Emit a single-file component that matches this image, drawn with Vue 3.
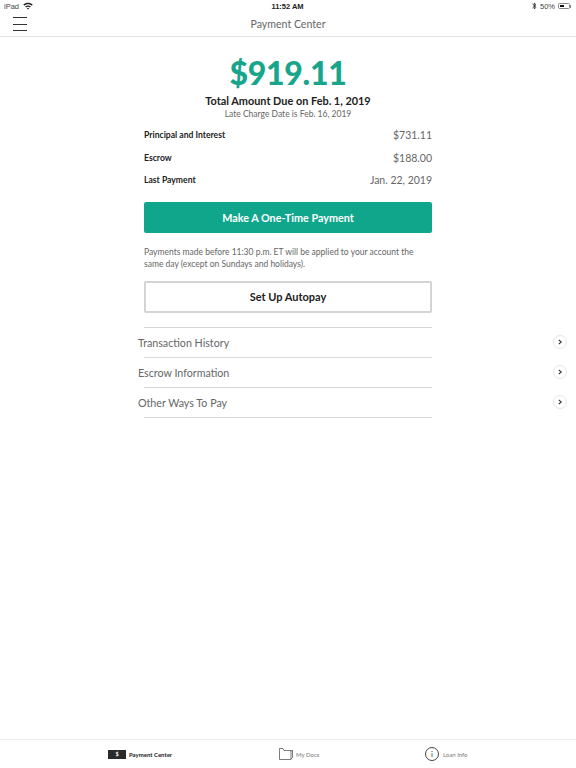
<template>
  <div class="page">
    <div class="status">
      <div class="status-left">
        <span>iPad</span>
        <svg class="wifi" width="10" height="8" viewBox="0 0 10 8"><path d="M0.3 2.6C3 0 7 0 9.7 2.6L8.7 3.7C6.5 1.7 3.5 1.7 1.3 3.7ZM2.1 4.5C3.8 3 6.2 3 7.9 4.5L6.9 5.5C5.8 4.6 4.2 4.6 3.1 5.5ZM3.9 6.4C4.5 5.9 5.5 5.9 6.1 6.4L5 7.6Z" fill="#222"/></svg>
      </div>
      <div class="status-time">11:52 AM</div>
      <div class="status-right">
        <svg width="5" height="8" viewBox="0 0 5 8"><path d="M0.5 2L4 5.3L2.3 7V1L4 2.7L0.5 6" fill="none" stroke="#222" stroke-width="0.8"/></svg>
        <span>50%</span>
        <span class="battery"><span class="battery-fill"></span></span>
        <span class="battery-tip"></span>
      </div>
    </div>
    <header class="topbar">
      <button class="menu" aria-label="Menu"><span></span><span></span><span></span></button>
      <div class="title">Payment Center</div>
    </header>

    <main class="content">
      <div class="amount">$919.11</div>
      <div class="due">Total Amount Due on Feb. 1, 2019</div>
      <div class="late">Late Charge Date is Feb. 16, 2019</div>

      <div class="details">
        <div v-for="row in details" :key="row.label" class="detail">
          <span class="detail-label">{{ row.label }}</span>
          <span class="detail-value">{{ row.value }}</span>
        </div>
      </div>

      <button class="btn-pay">Make A One-Time Payment</button>
      <p class="note">Payments made before 11:30 p.m. ET will be applied to your account the same day (except on Sundays and holidays).</p>
      <button class="btn-autopay">Set Up Autopay</button>
    </main>

    <nav class="links">
      <div class="rule"></div>
      <template v-for="link in links" :key="link">
        <div class="link">
          <span>{{ link }}</span>
          <span class="chevron">
            <svg width="6" height="6" viewBox="0 0 6 6"><path d="M1.8 0.8L4.2 3L1.8 5.2" fill="none" stroke="#333" stroke-width="1.1"/></svg>
          </span>
        </div>
        <div class="rule"></div>
      </template>
    </nav>

    <footer class="tabs">
      <div class="tab tab-pay">
        <span class="dollar">$</span>
        <span>Payment Center</span>
      </div>
      <div class="tab tab-docs">
        <svg width="14" height="12" viewBox="0 0 14 12"><path d="M0.5 2.5V11.5H12V2.5H5L4 0.5H0.5ZM12 3.5L13.5 2V9.5L12 11" fill="none" stroke="#444" stroke-width="0.7"/></svg>
        <span>My Docs</span>
      </div>
      <div class="tab tab-info">
        <span class="info">i</span>
        <span>Loan Info</span>
      </div>
    </footer>
  </div>
</template>

<script setup>
const details = [
  { label: 'Principal and Interest', value: '$731.11' },
  { label: 'Escrow', value: '$188.00' },
  { label: 'Last Payment', value: 'Jan. 22, 2019' }
]
const links = ['Transaction History', 'Escrow Information', 'Other Ways To Pay']
</script>

<style>
html, body { background: #fff; }
</style>

<style scoped>
.page { width: 576px; height: 768px; display: flex; flex-direction: column; font-family: Lato, "Open Sans", sans-serif; color: #222; background: #fff; overflow: hidden; }

.status { height: 12px; display: grid; grid-template-columns: 1fr auto 1fr; align-items: center; padding: 0 5px 0 4px; font-size: 7.5px; font-family: "Liberation Sans", sans-serif; }
.status-left { display: flex; align-items: center; gap: 4px; color: #444; }
.status-time { font-weight: 700; font-size: 7.5px; color: #222; }
.status-right { display: flex; align-items: center; justify-content: flex-end; gap: 3px; color: #444; }
.battery { width: 12px; height: 6px; border: 1px solid #888; border-radius: 1.5px; padding: 1px; box-sizing: border-box; display: block; }
.battery-fill { display: block; width: 50%; height: 100%; background: #111; }
.battery-tip { width: 1px; height: 3px; background: #888; margin-left: -3px; }

.topbar { height: 24px; border-bottom: 1px solid #e4e4e4; display: flex; align-items: center; justify-content: center; position: relative; }
.title { font-size: 10.6px; color: #666; }
.menu { position: absolute; left: 13px; top: 5px; width: 14px; height: 14px; padding: 0; border: 0; background: none; display: flex; flex-direction: column; justify-content: space-between; }
.menu span { display: block; height: 1px; background: #333; }

.content { width: 288px; margin: 0 auto; display: flex; flex-direction: column; align-items: stretch; }
.amount { margin-top: 16px; text-align: center; font-size: 32px; line-height: 40px; font-weight: 900; color: #17a58b; letter-spacing: -0.3px; }
.due { margin-top: 1px; text-align: center; font-size: 10.9px; line-height: 14px; font-weight: 700; color: #222; }
.late { text-align: center; font-size: 8.5px; line-height: 12px; color: #666; }

.details { margin-top: 4px; display: flex; flex-direction: column; }
.detail { height: 22.5px; display: flex; align-items: center; justify-content: space-between; }
.detail-label { font-size: 8.6px; font-weight: 700; color: #222; }
.detail-value { font-size: 10.5px; color: #666; }

.btn-pay { margin-top: 10px; height: 31px; border: 0; border-radius: 2px; background: #10a68c; color: #fff; font: 700 10.8px Lato, sans-serif; }
.note { margin: 13px 0 0; font-size: 8.5px; line-height: 12px; color: #666; }
.btn-autopay { margin-top: 11px; height: 32px; border: 2px solid #d4d4d4; border-radius: 2px; background: #fff; color: #222; font: 700 11px Lato, sans-serif; }

.links { margin: 14px 9px 0 138px; display: flex; flex-direction: column; }
.rule { width: 288px; margin-left: 6px; height: 1px; background: #d8d8d8; }
.link { height: 29px; display: flex; align-items: center; justify-content: space-between; font-size: 10.7px; color: #666; }
.chevron { width: 14px; height: 14px; border: 1px solid #e6e6e6; border-radius: 50%; box-sizing: border-box; display: flex; align-items: center; justify-content: center; }

.tabs { margin-top: auto; height: 28px; border-top: 1px solid #ececec; display: grid; grid-template-columns: 108px 171px 146px 1fr; align-items: center; font-size: 6px; color: #777; }
.tab { display: flex; align-items: center; gap: 3px; }
.tab-pay { grid-column: 2; font-weight: 700; color: #222; gap: 3px; }
.tab-docs { grid-column: 3; }
.tab-info { grid-column: 4; gap: 4px; }
.dollar { width: 18px; height: 9px; background: #2b2b2b; color: #fff; font-size: 5.5px; line-height: 9px; text-align: center; }
.info { width: 14px; height: 14px; border: 1px solid #444; border-radius: 50%; box-sizing: border-box; display: flex; align-items: center; justify-content: center; font-size: 8px; color: #333; }
</style>
